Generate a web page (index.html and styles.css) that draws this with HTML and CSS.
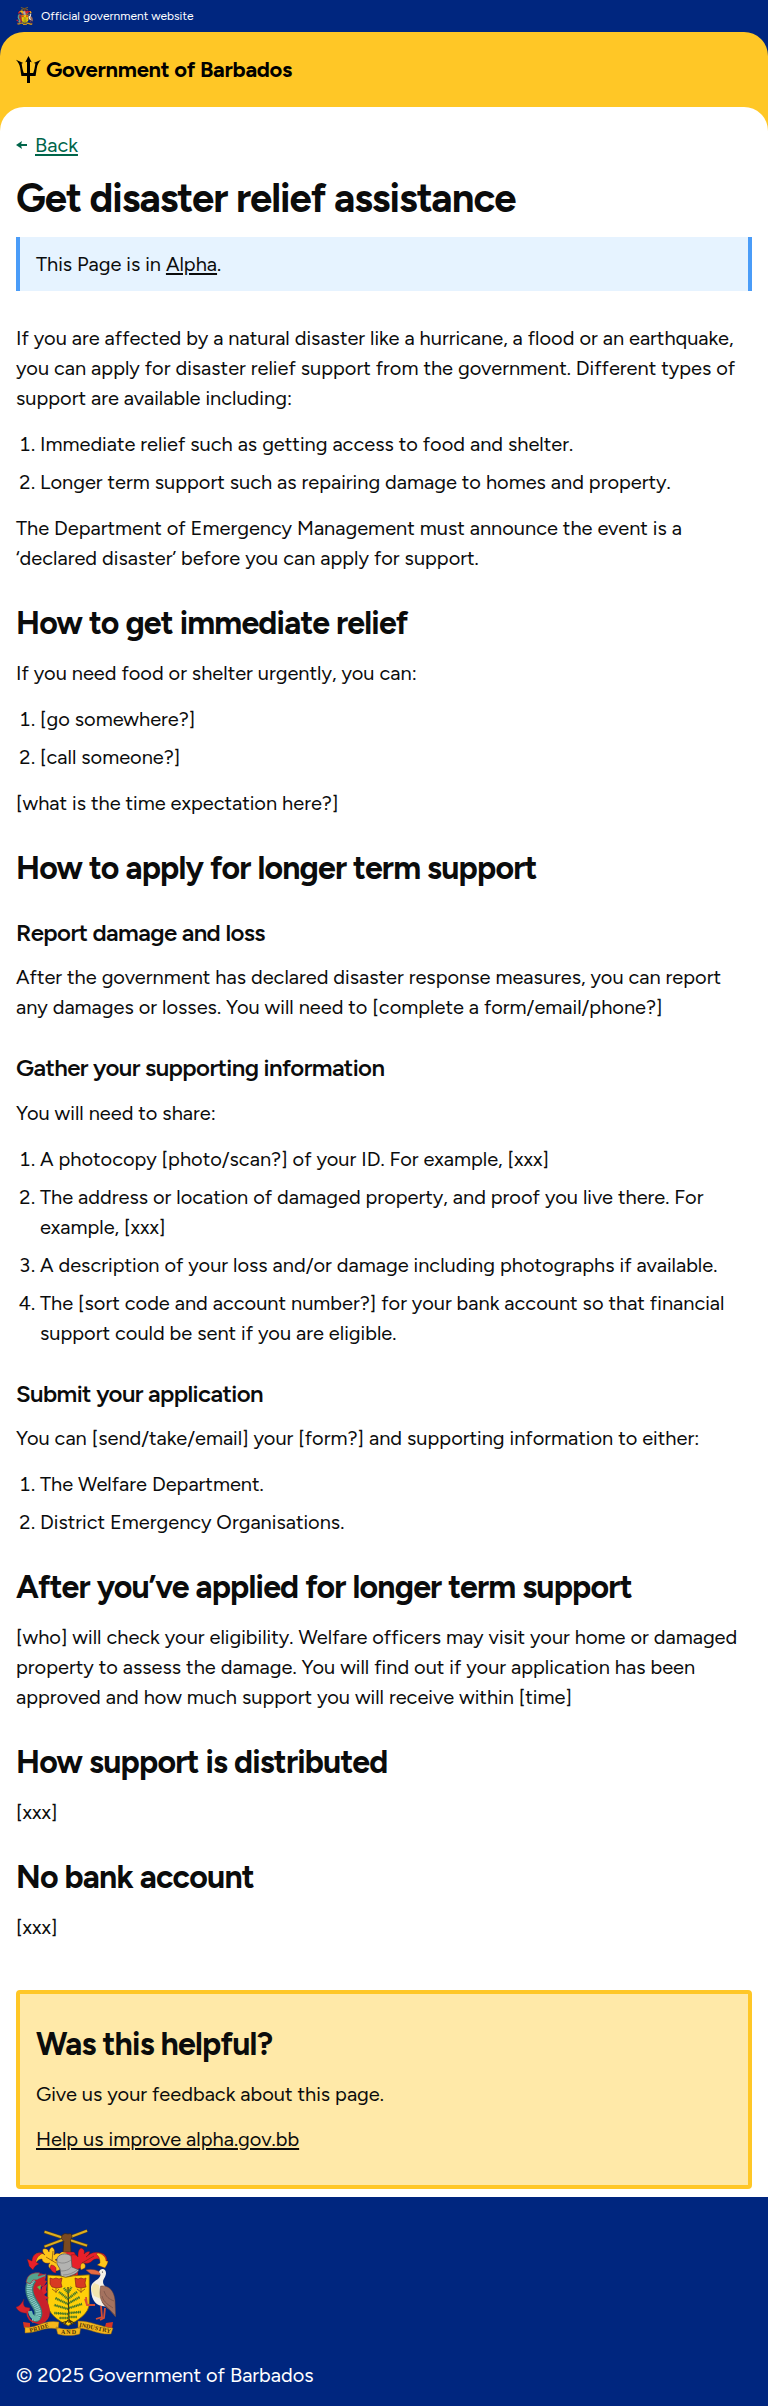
FILE: index.html
```html
<!DOCTYPE html>
<html lang="en">
<head>
<meta charset="utf-8">
<meta name="viewport" content="width=device-width, initial-scale=1">
<title>Get disaster relief assistance</title>
<link rel="stylesheet" href="styles.css">
</head>
<body>
<svg class="sprite" aria-hidden="true">
  <symbol id="crest" viewBox="0 0 100 107">
    <!-- crossed canes and fist -->
    <g stroke="#6b4c10" stroke-width="3"><path d="M28.3 2.7L71.3 16.7M71.3 1.7L28.3 17.7"/></g>
    <g stroke="#dcae20" stroke-width="2"><path d="M28.6 2.8L71 16.6M71 1.8L28.6 17.6"/></g>
    <path d="M46 6l3-1.5 3 .5 3-.5 1 3-1.500 4 .5 12h-8l.8-11-2.300-3z" fill="#7a4a22" stroke="#3a2413" stroke-width=".7"/>
    <!-- mantling -->
    <g stroke="#5b1a16" stroke-width=".4">
      <path d="M44 24l6-1 8 0 3 5 1 18-5 2-14-8z" fill="#e8202a"/>
      <path d="M45 40c-5 3-8 3-10 0-3-1-3-5-1-6-5 1-8-1-8-4-3 0-5 2-6 4l-3-5c1-5 7-7 12-3-2-2-3-4-2-6 3-1 5 0 6 3 0-2 1-4 3-5 3 2 3 5 2 8 2-2 4-2 6-1 0 4-3 5-5 6 3 0 4 3 3 5z" fill="#ffc61a"/>
      <path d="M27 24c-6-1-11 2-11 8l-5-2c1 3 2 5 2 7l4 4c1-3 3-5 6-6l-3-2c0-4 3-7 7-9zM35 36c2 0 4 1 5 3l0 5c-2 0-5-2-6-5z" fill="#e8202a"/>
      <path d="M55 26c3-1 6 0 7 2 0-4 0-7 3-9 3 1 4 3 3 6 2-2 4-3 6-2-1 2-2 4-4 5 4-4 10-6 15-4 4 1 6 4 6 8l-5 1c-2-4-7-4-10-1-2 2-5 3-8 2l-3 5c-4 1-6 3-6 7l-4-9z" fill="#e8202a"/>
      <path d="M82 24c5 1 8 4 8 8l2 0c0 3-2 5-3 7l-8-3 3-2c0-4-1-7-4-9zM66 34c3 0 4 2 3 5l-4 2c-1-3-1-5 1-7z" fill="#ffc61a"/>
    </g>
    <path d="M42 26l4-3 5 1-5 3z" fill="#ffc61a"/>
    <path d="M30 28l10 6M37 22l-1 10M78 27l-12 7" stroke="#5b3414" stroke-width=".6" fill="none"/>
    <!-- helmet -->
    <path d="M41 30c1-5 9-7 14-3l1 11 7 3c-3 5-8 5-14 8l-4-2-1-7-3-5z" fill="#b3b3b1" stroke="#555" stroke-width=".7"/>
    <path d="M42 33c4 2 9 1 13-2M45 42c6 0 9-2 11-5M47 46c6 0 10-2 14-5" fill="none" stroke="#7c7c7c" stroke-width=".7"/>
    <!-- shield -->
    <path d="M31.700 46l12 .8 6 1.500 8-1.500 15.600-1v28c0 11-11 17-21 23-11-6-20.600-12-20.600-23z" fill="#ffd009" stroke="#80610e" stroke-width=".8"/>
    <g fill="#d83b22" stroke="#8d2715" stroke-width=".7"><path d="M34 49l3 1 3-1 3 1 3-1-1 5 1 4-5 1-5-1-2-3zM59 49l3 1 3-1 3 1 2-1-1 5 1 4-5 1-5-1z"/></g>
    <path d="M36 60l4 3 3-3M40 59v5M61 60l4 3 4-3M65 59v5" fill="none" stroke="#a26612" stroke-width="1"/>
    <path d="M52 58l1 36M52 92l-7 2M52 91l-4 5M53 91l7 4M53 90l3 6" fill="none" stroke="#43310f" stroke-width="1.200"/>
    <g fill="none" stroke="#345626" stroke-width=".7">
      <path id="boughs" d="M52 64l-4-5M52.500 63l3-5M52 70l-9-7M53 69l8-6M52 75l-13-6M53 74l11-6M52 80l-14-4M53 79l13-4M52 85l-14-1M53 84l12-1M52 89l-9 0M53 88l8 0"/>
    </g>
    <use href="#boughs" fill="none" stroke="#3d7a2c" stroke-width="2.600" stroke-dasharray="1 .8"/>
    <!-- dolphin -->
    <path d="M26 58l5-3-1 6 1 2-3 3 5 3-6 2 0 3-3-6z" fill="#d9232d"/>
    <path d="M21 49c-9 3-4 14 0 21 5 9 7 17-1 21" fill="none" stroke="#c8202b" stroke-width="9" stroke-linecap="round" transform="translate(4 0)"/>
    <path d="M17 50c-7 9-3 18 3 27 4 7 3 13-4 13" fill="none" stroke="#397c78" stroke-width="8"/>
    <path d="M17 50c-7 9-3 18 3 27 4 7 3 13-4 13" fill="none" stroke="#86cbc6" stroke-width="5.500" stroke-dasharray="1.300 .6"/>
    <path d="M14 79l-5-1c-2-2-2-5-1-8-2 4-5 8-8 8 1 3 5 7 13 6z" fill="#d9232d" stroke="#731d2b" stroke-width=".4"/>
    <path d="M11 82c0 7 4 11 10 12 6-1 9-5 9-11" fill="none" stroke="#c8202b" stroke-width="1.600"/>
    <path d="M14 82c1 6 5 9 9 7" fill="none" stroke="#68b9ae" stroke-width="4"/>
    <path d="M11 50c1-4 6-7 13-6l-2 3 8-2-1 4-6 2-6 0-3 4-4-2z" fill="#55a58e" stroke="#a42936" stroke-width=".7"/>
    <path d="M22 50l7-3-1 4 3 1-3 5-7 2-2-4z" fill="#c8202b"/>
    <path d="M21 58l4-2-1 5z" fill="#65c251"/>
    <!-- pelican -->
    <path d="M84 43c-5-3-11-3-14-2l5 4 9 1z" fill="#e76b43" stroke="#96442f" stroke-width=".5"/>
    <path d="M83 43c1-4 7-4 7 1 0 5-5 7-2 12l5 6 3 18c-4-2-8-3-10-3-8-1-11-9-11-18 0-5 4-7 7-9 3-3 3-5 1-7z" fill="#f5f1e7"/>
    <path d="M78 54l5 2 2 14-7-3-3-7z" fill="#f3e6ae"/>
    <path d="M85 57c8-1 13 5 14 14l.7 17-6-7c-9-6-11-14-9-24z" fill="#a4725f" stroke="#664037" stroke-width=".5"/>
    <path d="M86 67c2 7 7 9 11 12M88 62c2 6 5 8 10 10M86 73l13 13" fill="none" stroke="#6f4c43" stroke-width=".6"/>
    <path d="M85 77l1 11-6 2M89 79l-1 10-4 2M79 76l-8 0-1-8M71 76l-2-6" fill="none" stroke="#d64e33" stroke-width="1.800"/>
    <circle cx="86.500" cy="43" r=".6" fill="#222"/>
    <!-- motto ribbon -->
    <path d="M7 93l7 1 0 4-6 1zM90 94l7-1-1 6-7-1z" fill="#d83422"/>
    <path d="M9 98c12 2 18-8 34-5l-1 7c-14-3-20 4-33 4zM62 92c14 0 22 6 35 7l-2 6c-12 1-20-5-33-6zM40 98c8 3 17 3 24.700 0l-1 7c-7 2-15 2-22 0z" fill="#f5b61b" stroke="#8e6514" stroke-width=".5"/>
    <g class="motto">
      <text x="14" y="103.500" textLength="20" transform="rotate(-16 14 103.500)">PRIDE</text>
      <text x="45" y="105" textLength="15">AND</text>
      <text x="63" y="97.500" textLength="32" transform="rotate(12 63 97.500)">INDUSTRY</text>
    </g>
  </symbol>
</svg>

<div class="topbar">
  <svg class="topbar-crest"><use href="#crest"/></svg>
  <span>Official government website</span>
</div>
<div class="brand-wrap">
  <header class="brand">
    <svg class="trident" viewBox="0 0 25 27"><path d="M12.500 0l3.200 6.200-1.700-.5V17h3.200c1.200-3 1.600-6 2.200-9.500L17.800 7 25 3.800c-2.400 2.700-3.700 5.200-4.200 8.400L19.600 20H14v7h-3v-7H5.400L4.200 12.200C3.700 9 2.400 6.500 0 3.800L7.200 7l-1.600.5C6.200 11 6.600 14 7.800 17H11V5.700l-1.700.5z"/></svg>
    <span class="brand-name">Government of Barbados</span>
  </header>
</div>
<div class="page-wrap">
  <main class="page">
    <a class="back" href="#"><svg class="arrow" viewBox="0 0 11 8"><path d="M0 4L6 0 5.200 3H11V5H5.200L6 8z"/></svg><span class="back-label">Back</span></a>
    <h1>Get disaster relief assistance</h1>
    <div class="notice">This Page is in <a href="#">Alpha</a>.</div>

    <div class="content">
      <p>If you are affected by a natural disaster like a hurricane, a flood or an earthquake, you can apply for disaster relief support from the government. Different types of support are available including:</p>
      <ol>
        <li>Immediate relief such as getting access to food and shelter.</li>
        <li>Longer term support such as repairing damage to homes and property.</li>
      </ol>
      <p>The Department of Emergency Management must announce the event is a ‘declared disaster’ before you can apply for support.</p>
      <h2>How to get immediate relief</h2>
      <p>If you need food or shelter urgently, you can:</p>
      <ol>
        <li>[go somewhere?]</li>
        <li>[call someone?]</li>
      </ol>
      <p>[what is the time expectation here?]</p>
      <h2>How to apply for longer term support</h2>
      <h3>Report damage and loss</h3>
      <p>After the government has declared disaster response measures, you can report any damages or losses. You will need to [complete a form/email/phone?]</p>
      <h3>Gather your supporting information</h3>
      <p>You will need to share:</p>
      <ol>
        <li>A photocopy [photo/scan?] of your ID. For example, [xxx]</li>
        <li>The address or location of damaged property, and proof you live there. For example, [xxx]</li>
        <li>A description of your loss and/or damage including photographs if available.</li>
        <li>The [sort code and account number?] for your bank account so that financial support could be sent if you are eligible.</li>
      </ol>
      <h3>Submit your application</h3>
      <p>You can [send/take/email] your [form?] and supporting information to either:</p>
      <ol>
        <li>The Welfare Department.</li>
        <li>District Emergency Organisations.</li>
      </ol>
      <h2>After you’ve applied for longer term support</h2>
      <p>[who] will check your eligibility. Welfare officers may visit your home or damaged property to assess the damage. You will find out if your application has been approved and how much support you will receive within [time]</p>
      <h2>How support is distributed</h2>
      <p>[xxx]</p>
      <h2>No bank account</h2>
      <p>[xxx]</p>
    </div>

    <section class="feedback">
      <h2>Was this helpful?</h2>
      <p>Give us your feedback about this page.</p>
      <p><a href="#">Help us improve alpha.gov.bb</a></p>
    </section>
  </main>
</div>
<footer class="footer">
  <svg class="footer-crest"><use href="#crest"/></svg>
  <p>© 2025 Government of Barbados</p>
</footer>
</body>
</html>
```

FILE: styles.css
```css
* { box-sizing: border-box; }

body {
  margin: 0;
  background: #fff;
  color: #0b0c0c;
  font-family: Figtree, Lato, "Noto Sans", sans-serif;
  font-size: 20px;
  line-height: 30px;
}

.sprite { display: none; }
.motto { font: 700 6px "Liberation Serif", serif; letter-spacing: 0; fill: #49300c; }

.topbar {
  display: flex;
  align-items: center;
  gap: 8px;
  height: 32px;
  padding: 0 16px;
  background: #00267f;
  color: #fff;
  font-size: 12px;
  line-height: 18px;
}
.topbar-crest { width: 17px; height: 18px; }

.brand-wrap { background: #00267f; }
.brand {
  display: flex;
  align-items: center;
  gap: 5px;
  height: 75px;
  padding: 0 16px;
  background: #ffc726;
  border-radius: 24px 24px 0 0;
}
.trident { width: 25px; height: 27px; fill: #000; }
.brand-name { color: #000; font-size: 22px; font-weight: 700; letter-spacing: -0.3px; }

.page-wrap { background: #ffc726; }
.page {
  padding: 23px 16px 8px;
  background: #fff;
  border-radius: 24px 24px 0 0;
}

a { color: inherit; text-decoration: underline; text-decoration-thickness: 2px; text-underline-offset: 2px; }

.back { display: flex; align-items: center; gap: 8px; height: 30px; color: #00654a; text-decoration: none; }
.back-label { text-decoration: underline; text-decoration-thickness: 2px; text-underline-offset: 2px; }
.arrow { width: 11px; height: 8px; fill: currentColor; }

h1, h2, h3 { margin: 32px 0 16px; line-height: 1.15; letter-spacing: -0.025em; font-weight: 700; }
h1 { margin: 15px 0 16px; font-size: 40px; }
h2 { font-size: 32px; }
h3 { font-size: 24px; font-weight: 600; }

p { margin: 0 0 16px; }

ol { margin: 0 0 16px; padding-left: 24px; }
li + li { margin-top: 8px; }

.notice {
  height: 54px;
  padding: 12px 16px;
  background: #e6f3ff;
  border: solid #4a9cf8;
  border-width: 0 4px;
}

.content { margin-top: 32px; }
.content > p:last-child { margin-bottom: 48px; }

.feedback {
  height: 199px;
  padding: 0 16px;
  display: flow-root;
  background: #ffe9a8;
  border: 4px solid #ffc726;
  border-radius: 4px;
}
.feedback p { margin-bottom: 15px; }

.footer { height: 209px; padding: 32px 16px 16px; background: #00267f; color: #fff; }
.footer-crest { display: block; width: 100px; height: 107px; margin-bottom: 24px; }
.footer p { margin: 0; }
```
